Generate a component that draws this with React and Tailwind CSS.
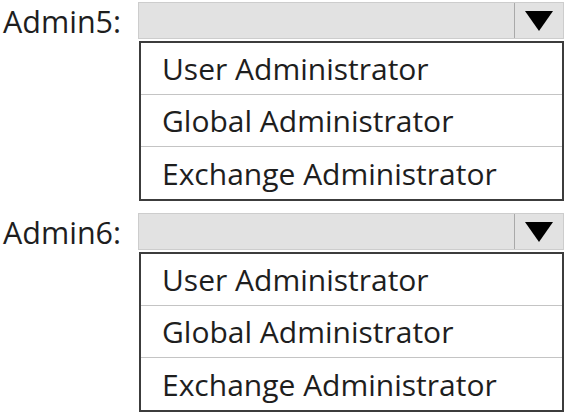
import React from "react";

const options = ["User Administrator", "Global Administrator", "Exchange Administrator"];

function Block({ label, top }) {
  return (
    <div className={`flex ${top}`}>
      <div className="w-[138px] shrink-0 pl-[3px] text-[30.5px] leading-[38px] text-[#1e1e1e]">{label}</div>
      <div className="flex w-[426px] flex-col">
        <div className="flex h-[37px] border border-[#cdcdcd] bg-[#e2e2e2]">
          <div className="flex-1" />
          <div className="flex w-[49px] items-center justify-center border-l border-[#a9a9a9]">
            <svg width="28" height="20" viewBox="0 0 28 20">
              <polygon points="0,0 28,0 14,20" fill="#000" />
            </svg>
          </div>
        </div>
        <div className="mt-[2px] ml-[1px] flex flex-col border-2 border-[#3c3c3c] bg-white">
          {options.map((o, i) => (
            <div
              key={o}
              className={`flex h-[52px] items-center pl-[21px] text-[30px] text-[#1e1e1e] ${i < 2 ? "border-b border-[#c4c4c4]" : ""}`}
            >
              {o}
            </div>
          ))}
        </div>
      </div>
    </div>
  );
}

export default function App() {
  return (
    <div className="flex h-[416px] w-[566px] flex-col bg-white pt-[2px] font-['Open_Sans',sans-serif]">
      <Block label="Admin5:" top="" />
      <Block label="Admin6:" top="mt-[12px]" />
    </div>
  );
}
